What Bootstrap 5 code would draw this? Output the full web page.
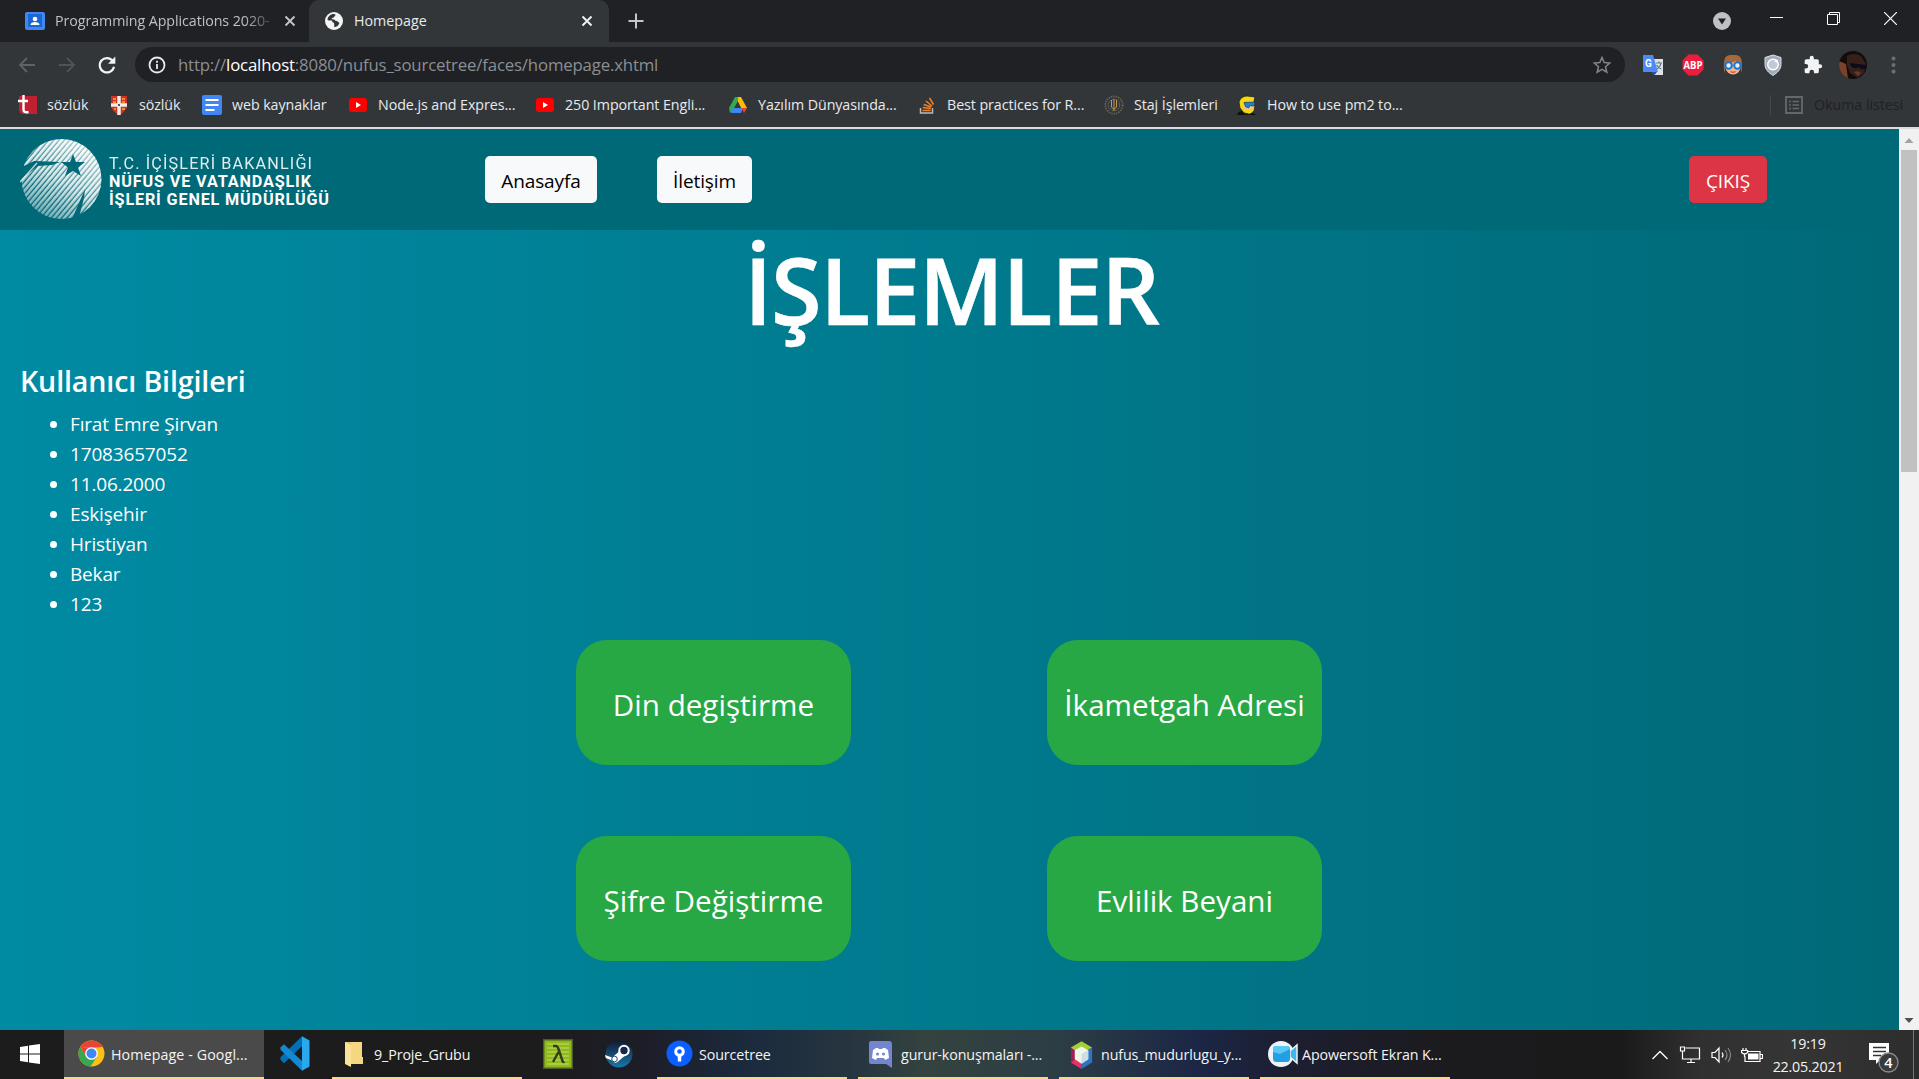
<!DOCTYPE html>
<html lang="tr">
<head>
<meta charset="utf-8">
<title>Homepage</title>
<link href="https://cdn.jsdelivr.net/npm/bootstrap@5.3.0/dist/css/bootstrap.min.css" rel="stylesheet">
<script src="https://cdn.jsdelivr.net/npm/bootstrap@5.3.0/dist/js/bootstrap.bundle.min.js"></script>
<style>
  html, body { height: 1079px; overflow: hidden; }
  body { width: 1919px; font-family: "Open Sans", "Noto Sans", sans-serif; font-size: 14.25px; line-height: 20px; color: #e8eaed; background: #323639; }
  svg { display: block; flex: none; }

  .tabstrip { height: 42px; background: #202124; }
  .tab-idle { width: 309px; padding: 0 0 0 25px; color: #bdc1c6; }
  .tab-idle .tab-name { width: 219px; margin-left: 10px; letter-spacing: -.07px; -webkit-mask-image: linear-gradient(90deg, #000 86%, transparent 102%); mask-image: linear-gradient(90deg, #000 86%, transparent 102%); }
  .tab-idle .tab-x { margin-left: 10px; }
  .tab-open { width: 300px; padding-left: 15px; background: #323639; border-radius: 10px 10px 0 0; }
  .tab-open .tab-name { width: 223px; margin-left: 10px; }
  .tab-plus { margin-left: 19px; }
  .win-cell { width: 57px; padding-top: 12px; }
  .tab-search { margin: 12px 17px 0 auto; }

  .toolbar { height: 44px; padding-left: 17px; padding-top: 1px; }
  .nav-cell { width: 40px; }
  .omnibox { width: 1490px; height: 35px; border-radius: 18px; background: #202124; margin-left: -2px; padding: 0 13px 0 12px; font-size: 16.8px; color: #9aa0a6; }
  .omnibox .url { margin-left: 11px; letter-spacing: -.17px; color: #8b8f94; }
  .omnibox .url b { font-weight: 400; color: #fff; }
  .ext-row { margin-left: 8px; }
  .ext-cell { width: 40px; }

  .bookmarks { height: 41px; padding: 0 16px 4px 17px; }
  .bm-grid { display: grid; grid-template-columns: 92px 93px 146px 187px 193px 189px 187px 133px 190px; }
  .bm-grid > div { gap: 10px; white-space: nowrap; letter-spacing: -.07px; }
  .reading { border-left: 1px solid #45494d; height: 20px; padding-left: 14px; gap: 11px; color: #202124; letter-spacing: -.05px; }

  .viewport { height: 903px; border-top: 2px solid #dcdcde; }
  .page { width: 1899px; background: linear-gradient(90deg, #008ba3, #006978); color: #fff; font-size: 19px; line-height: 30px; }
  .site-head { height: 101px; background: #006978; padding: 0 132px 0 20px; }
  .site-btn { font-size: 19px; line-height: 30px; padding: 8.5px 15px 5px; height: 47px; border-radius: 5px; border: 1px solid transparent; letter-spacing: -.1px; }
  .site-btn.first { width: 112px; margin-left: 153px; }
  .site-btn.second { width: 95px; margin-left: 60px; }
  .site-btn.out { width: 78px; background: #dc3545; }
  .page-title { font-size: 92px; font-weight: 600; line-height: 112px; margin: 4px 0 0 4px; letter-spacing: -1.3px; -webkit-text-stroke: .6px #fff; }
  .user-box { padding: 17px 0 0 20px; }
  .user-box h4 { font-size: 28.6px; font-weight: 600; line-height: 36px; margin: 0 0 10px; letter-spacing: -.13px; }
  .user-box ul { padding-left: 50px; margin: 0; letter-spacing: -.17px; }
  .ops { display: grid; grid-template-columns: 275px 275px; column-gap: 196px; row-gap: 71px; margin: 21px 0 0 576px; }
  .op-card { height: 125px; background: #28a745; border-radius: 31px; font-size: 29.6px; line-height: 45px; padding-top: 4px; white-space: nowrap; }
  .scroll-track { width: 20px; background: #f1f1f1; }
  .scroll-thumb { width: 16px; height: 322px; background: #c1c1c1; }

  .taskbar { height: 49px; background: linear-gradient(90deg, #1c1c1c 0, #1c1c1d 540px, #1d1d27 640px, #1b2a3d 745px, #26353f 850px, #34433f 925px, #2c3d45 1060px, #1b2645 1200px, #1d1e30 1290px, #1b1b1e 1450px, #1a1a1a 1620px, #303030 1700px, #353535 1790px, #2d2d2d 1919px); font-size: 14.25px; color: #f4f4f4; }
  .task { border-bottom: 2px solid transparent; white-space: nowrap; letter-spacing: -.1px; }
  .task.run { border-color: #fcd77f; width: 190px; margin-right: 11px; padding-left: 9px; gap: 6px; }
  .task.current { width: 200px; background: #4a4a4a; margin-right: 0; padding-left: 14px; letter-spacing: .1px; }
  .task.icon-only { width: 68px; }
  .task.start { width: 64px; padding-left: 20px; }
  .task.pinned { width: 124px; padding-left: 10px; gap: 32px; }
  .task > span { padding-top: 3px; }
  .tray { margin-right: 5px; }
  .clock { width: 82px; text-align: center; line-height: 23px; letter-spacing: -.2px; }
  .notif { margin: 4px 0 0 19px; }
  .desk-edge { width: 1px; height: 49px; background: #777; margin-left: 11px; }
</style>
</head>
<body class="d-flex flex-column">

<!-- tab strip -->
<div class="tabstrip d-flex flex-none">
  <div class="tab-idle d-flex align-items-center">
    <svg width="20" height="20" viewBox="0 0 20 20"><rect y="1" width="20" height="18" rx="2" fill="#4285f4"/><rect x="3" y="3" width="14" height="13" fill="#1967d2"/><circle cx="10" cy="8" r="2.300" fill="#fff"/><path d="M5.500 14c0-4 9-4 9 0z" fill="#fff"/></svg>
    <div class="tab-name text-nowrap overflow-hidden">Programming Applications 2020-</div>
    <svg class="tab-x" width="12" height="12" viewBox="0 0 12 12"><path d="M1.500 1.500l9 9m0-9l-9 9" stroke="#c4c7ca" stroke-width="1.800"/></svg>
  </div>
  <div class="tab-open d-flex align-items-center">
    <svg width="20" height="20" viewBox="0 0 20 20"><circle cx="10" cy="10" r="9" fill="#f4f5f5"/><path d="M10 3c-3 0-6 2-6.600 5.500 1.500 1.600 3 1 4.600 1 .2 1 .2 2 2 2.200l.4 4.600c2.500-.300 4-2 5-4-1-1.500-2-2.500-4-2.600-.8-1.500-2.500-1.400-4-1.700.2-1 1.800-.7 2.400-1.700.3-1.300 1.700-1 1.700-2.900z" fill="#323639"/></svg>
    <div class="tab-name">Homepage</div>
    <svg class="ms-1" width="12" height="12" viewBox="0 0 12 12"><path d="M1.500 1.500l9 9m0-9l-9 9" stroke="#f1f3f4" stroke-width="1.900"/></svg>
  </div>
  <svg class="tab-plus align-self-center" width="16" height="16" viewBox="0 0 16 16"><path d="M8 .5v15M.5 8h15" stroke="#c4c7ca" stroke-width="2"/></svg>
  <svg class="tab-search" width="18" height="18" viewBox="0 0 18 18"><circle cx="9" cy="9" r="9" fill="#bdc1c6"/><path d="M5 6.500h8L9 12.500z" fill="#202124"/></svg>
  <div class="win-cell d-flex justify-content-center"><svg width="13" height="13"><path d="M0 5.500h13" stroke="#fff"/></svg></div>
  <div class="win-cell d-flex justify-content-center"><svg width="13" height="13"><path d="M.5 2.500h10v10H.5zM2.500 2.500v-2h10v10h-2" fill="none" stroke="#fff"/></svg></div>
  <div class="win-cell d-flex justify-content-center"><svg width="13" height="13"><path d="M0 0l13 13M13 0L0 13" stroke="#fff" stroke-width="1.200"/></svg></div>
</div>

<!-- address row -->
<div class="toolbar d-flex align-items-center">
  <div class="nav-cell"><svg width="20" height="20" viewBox="0 0 20 20"><path d="M18 10H3M10 3l-7 7 7 7" fill="none" stroke="#5f6368" stroke-width="1.800"/></svg></div>
  <div class="nav-cell"><svg width="20" height="20" viewBox="0 0 20 20"><path d="M2 10h15M10 3l7 7-7 7" fill="none" stroke="#505458" stroke-width="1.800"/></svg></div>
  <div class="nav-cell"><svg width="20" height="20" viewBox="0 0 20 20"><path d="M15.800 6A7.200 7.200 0 1 0 17 11.800" fill="none" stroke="#f1f3f4" stroke-width="2.200"/><path d="M18.300 1.500v7.300H11z" fill="#f1f3f4"/></svg></div>
  <div class="omnibox d-flex align-items-center">
    <svg class="ms-0" width="20" height="20" viewBox="0 0 20 20"><circle cx="10" cy="10" r="7.500" fill="none" stroke="#e8eaed" stroke-width="1.800"/><path d="M10 9v5M10 5.800v1.900" stroke="#e8eaed" stroke-width="1.800"/></svg>
    <span class="url text-nowrap">http://<b>localhost</b>:8080/nufus_sourcetree/faces/homepage.xhtml</span>
    <svg class="ms-auto" width="20" height="20" viewBox="0 0 20 20"><path d="M10 2.500l2.200 5.100 5.500.5-4.200 3.700 1.300 5.400-4.800-2.900-4.800 2.900 1.300-5.400L2.300 8.100l5.500-.5z" fill="none" stroke="#80858a" stroke-width="1.500"/></svg>
  </div>
  <div class="ext-row d-flex align-items-center">
    <div class="ext-cell d-flex justify-content-center"><svg width="22" height="22" viewBox="0 0 22 22"><path d="M8 5h13v16H12z" fill="#dfe1e3"/><path d="M1 1h10l5 17H1z" fill="#4c8bf5"/><path d="M9 18h6l-3 3.500z" fill="#3347a8"/><path d="M14 9h6m-3-1.500V9m2 0c-.5 3-2 5-4 6m-.5-4c1 2 3 3.500 5 4" stroke="#607d8b" fill="none" stroke-width="1.200"/><text x="3" y="12.500" font-size="10" font-weight="700" font-family="Roboto" fill="#fff">G</text></svg></div>
    <div class="ext-cell d-flex justify-content-center"><svg width="22" height="22" viewBox="0 0 22 22"><path d="M6.500.5h9l6 6v9l-6 6h-9l-6-6v-9z" fill="#ee1d3e"/><text x="11" y="14.500" text-anchor="middle" textLength="19" lengthAdjust="spacingAndGlyphs" font-size="10.500" font-weight="700" font-family="Open Sans" fill="#fff">ABP</text></svg></div>
    <div class="ext-cell d-flex justify-content-center"><svg width="22" height="22" viewBox="0 0 22 22"><ellipse cx="11" cy="13" rx="7.500" ry="7.500" fill="#f3b48b"/><path d="M2.500 19C0 0 6 1 11 1s11-1 8.500 18L18 12c-2-1-4-3-4.500-5C11 9 7 10 4 11z" fill="#a9683a"/><circle cx="6.600" cy="11.500" r="3.200" fill="#e3f2ff" stroke="#1976d2" stroke-width="2"/><circle cx="15.400" cy="11.500" r="3.200" fill="#e3f2ff" stroke="#1976d2" stroke-width="2"/><path d="M8.500 17.500q2.500 1.500 5 0" stroke="#c43" stroke-width="1.200" fill="none"/></svg></div>
    <div class="ext-cell d-flex justify-content-center"><svg width="22" height="22" viewBox="0 0 22 22"><path d="M11 1l8 2.500v7c0 5-4 8.500-8 11-4-2.500-8-6-8-11v-7z" fill="#a3acbc" stroke="#dce0e6"/><circle cx="11" cy="10.500" r="5.300" fill="#c4cad5" stroke="#fff" stroke-width="1.400"/><circle cx="14.500" cy="7" r="1.500" fill="#fff"/></svg></div>
    <div class="ext-cell d-flex justify-content-center"><svg width="20" height="20" viewBox="0 0 24 24"><path d="M20.500 11H19V7a2 2 0 0 0-2-2h-4V3.500a2.500 2.500 0 0 0-5 0V5H4a2 2 0 0 0-2 2v3.800h1.500a2.700 2.700 0 0 1 0 5.400H2V20a2 2 0 0 0 2 2h3.800v-1.500a2.700 2.700 0 0 1 5.400 0V22H17a2 2 0 0 0 2-2v-4h1.500a2.500 2.500 0 0 0 0-5z" fill="#f1f3f4"/></svg></div>
    <div class="ext-cell d-flex justify-content-center"><svg width="28" height="28" viewBox="0 0 28 28"><defs><clipPath id="av"><circle cx="14" cy="14" r="14"/></clipPath></defs><g clip-path="url(#av)"><path d="M0 0h28v28H0z" fill="#120c0b"/><path d="M0 10l7 3 2 15H0z" fill="#7c4229"/><path d="M8 5q7-4 14 0l5 8-2 9-6 5-8-5-3-8z" fill="#37201a"/><path d="M11 12l8 1 8 1-1 4q-5 1-6-2-2 2-5 1-4-1-4-5z" fill="#0b0b1b"/><path d="M15 21q4-2 7 1l-3 3z" fill="#6b3a26"/><path d="M21 28l7-8v8z" fill="#9b5d31"/></g></svg></div>
    <div class="ext-cell d-flex justify-content-center"><svg width="5" height="18"><g fill="#6b6f73"><circle cx="2.500" cy="2.500" r="2"/><circle cx="2.500" cy="9" r="2"/><circle cx="2.500" cy="15.500" r="2"/></g></svg></div>
  </div>
</div>

<!-- bookmarks -->
<div class="bookmarks d-flex align-items-center justify-content-between">
  <div class="bm-grid">
    <div class="d-flex align-items-center"><svg width="20" height="20" viewBox="0 0 20 20"><path d="M2 1h18v18H5q-3-1-3-5z" fill="#c0202f"/><path d="M6.500 0v14.500q0 3.500 5 2.500M1 6h10" stroke="#fff" stroke-width="2.400" fill="none"/></svg>sözlük</div>
    <div class="d-flex align-items-center"><svg width="20" height="20" viewBox="0 0 20 20"><path d="M2 1h16v11q-2 5-8 8-6-3-8-8z" fill="#cf3327"/><path d="M10 1v19M2 10h16" stroke="#f3ece4" stroke-width="3.500"/><path d="M4 4h3m6 0h3M4 7h3m6 0h3M5 14h2m6 0h3" stroke="#f0b03c" stroke-width="1.500"/><path d="M9 10h2" stroke="#555" stroke-width="2"/></svg>sözlük</div>
    <div class="d-flex align-items-center"><svg width="20" height="20" viewBox="0 0 20 20"><rect width="20" height="20" rx="2" fill="#4285f4"/><path d="M3.500 5h13M3.500 10h13M3.500 15h9" stroke="#fff" stroke-width="2"/></svg>web kaynaklar</div>
    <div class="d-flex align-items-center"><svg width="20" height="20" viewBox="0 0 20 20"><rect x="1" y="3" width="18" height="14" rx="3" fill="#f00"/><path d="M8 7l5 3-5 3z" fill="#fff"/></svg>Node.js and Expres...</div>
    <div class="d-flex align-items-center"><svg width="20" height="20" viewBox="0 0 20 20"><rect x="1" y="3" width="18" height="14" rx="3" fill="#f00"/><path d="M8 7l5 3-5 3z" fill="#fff"/></svg>250 Important Engli...</div>
    <div class="d-flex align-items-center"><svg width="20" height="20" viewBox="0 0 20 20"><path d="M7 2h3v4l-5 9-3 3-1-5z" fill="#34a853"/><path d="M10 2h3l6 11h-6l-3-6z" fill="#fbbc04"/><path d="M5 13h10l-2 5H4l-2-1z" fill="#4285f4"/><path d="M13.500 13H19l-3 5z" fill="#ea4335"/><path d="M10 7l3 6H7z" fill="#323639"/></svg>Yazılım Dünyasında...</div>
    <div class="d-flex align-items-center"><svg width="20" height="20" viewBox="0 0 20 20"><path d="M3.500 13v5h12v-5" stroke="#bcbbbb" stroke-width="1.500" fill="none"/><path d="M5.500 15.500h8M5.700 12.500l8 1M6.700 9.500l7.500 2.500M9 6l6 5M12.500 3l4 6.500" stroke="#f48024" stroke-width="1.500"/></svg>Best practices for R...</div>
    <div class="d-flex align-items-center"><svg width="20" height="20" viewBox="0 0 20 20"><circle cx="10" cy="10" r="8.700" fill="#303943" stroke="#6f6347" stroke-width="1.600" stroke-dasharray="1.500 1"/><circle cx="10" cy="10" r="5.700" fill="none" stroke="#756744" stroke-dasharray="2 1"/><path d="M10 4v12M7.500 5v7q2.500 4 5 0V5" stroke="#c29a4b" fill="none"/></svg>Staj İşlemleri</div>
    <div class="d-flex align-items-center"><svg width="20" height="20" viewBox="0 0 20 20"><path d="M0 20q1-4 5-4l10 1 4 3z" fill="#111"/><path d="M2 7q2-6 8-6l8 1-1 4 1 5-1 5-4 3-6-1-4-5z" fill="#f5d90f" stroke="#222" stroke-width=".8"/><path d="M6 7l9-2 2 5-1 5-4 2-5-3z" fill="#f0bd93"/><path d="M7 7.500l11-.5-.5 4h-3l-1-1-2 3-3-1.500z" fill="#1787d4" stroke="#123" stroke-width=".6"/><path d="M8 14l6 .5 2-1-1 4-4 1z" fill="#f5d90f"/></svg>How to use pm2 to...</div>
  </div>
  <div class="reading d-flex align-items-center">
    <svg width="18" height="18" viewBox="0 0 18 18"><path d="M1 1h16v16H1z" fill="none" stroke="#64686c" stroke-width="1.800"/><path d="M4 5.500h2m1.500 0H14M4 9h2m1.500 0H14M4 12.500h2m1.500 0H14" stroke="#64686c" stroke-width="1.500"/></svg>
    <span>Okuma listesi</span>
  </div>
</div>

<!-- web page -->
<div class="viewport d-flex">
  <main class="page">
    <header class="site-head d-flex align-items-center">
      <svg width="312" height="84" viewBox="0 0 312 84" font-family="Roboto, sans-serif" font-size="16.200" fill="#fff">
        <defs>
          <pattern id="hatch" width="4" height="4" patternUnits="userSpaceOnUse" patternTransform="rotate(40)"><path d="M0 0h2.700v4H0z" fill="#fff"/></pattern>
          <linearGradient id="fadeGlobe" x1=".75" y1=".1" x2=".25" y2=".95"><stop offset="0" stop-color="#fff"/><stop offset=".5" stop-color="#ddd"/><stop offset="1" stop-color="#777"/></linearGradient>
          <mask id="globe"><circle cx="41.500" cy="41" r="40" fill="url(#fadeGlobe)"/><path d="M53 16l3 8 9 0-7 5.500 3 8.500-8-5-8 5 3-8.500-7-5.500h9zM0 30l14-7 26 1-8 3-14 1L0 42zM51 83l8-18 6-14-1 9-6 23z" fill="#000"/></mask>
          <linearGradient id="glow" x1=".9" y1="0" x2=".3" y2=".7"><stop offset="0" stop-color="#fff" stop-opacity=".75"/><stop offset="1" stop-color="#fff" stop-opacity="0"/></linearGradient>
        </defs>
        <g mask="url(#globe)"><path d="M0 0h84v84H0z" fill="url(#hatch)"/><path d="M0 0h84v84H0z" fill="url(#glow)"/></g>
        <path d="M0 44l17-19" stroke="#fff" stroke-width="1.500" opacity=".7"/>
        <text x="89" y="31" textLength="203" opacity=".88">T.C. İÇİŞLERİ BAKANLIĞI</text>
        <text x="89" y="48.500" textLength="202" font-weight="700">NÜFUS VE VATANDAŞLIK</text>
        <text x="89" y="67" textLength="220" font-weight="700">İŞLERİ GENEL MÜDÜRLÜĞÜ</text>
      </svg>
      <a class="btn btn-light site-btn first text-nowrap">Anasayfa</a>
      <a class="btn btn-light site-btn second text-nowrap">İletişim</a>
      <a class="btn btn-danger site-btn out ms-auto text-nowrap">ÇIKIŞ</a>
    </header>
    <h1 class="page-title text-center">İŞLEMLER</h1>
    <section class="user-box">
      <h4>Kullanıcı Bilgileri</h4>
      <ul>
        <li>Fırat Emre Şirvan</li>
        <li>17083657052</li>
        <li>11.06.2000</li>
        <li>Eskişehir</li>
        <li>Hristiyan</li>
        <li>Bekar</li>
        <li>123</li>
      </ul>
    </section>
    <section class="ops">
      <div class="op-card d-flex align-items-center justify-content-center">Din degiştirme</div>
      <div class="op-card d-flex align-items-center justify-content-center">İkametgah Adresi</div>
      <div class="op-card d-flex align-items-center justify-content-center">Şifre Değiştirme</div>
      <div class="op-card d-flex align-items-center justify-content-center">Evlilik Beyani</div>
    </section>
  </main>
  <div class="scroll-track d-flex flex-column align-items-center justify-content-between">
    <div><svg width="16" height="21"><path d="M3.500 14l4.500-5 4.500 5z" fill="#a3a3a3"/></svg><div class="scroll-thumb"></div></div>
    <svg width="16" height="21"><path d="M3.500 9l4.500 5 4.500-5z" fill="#505050"/></svg>
  </div>
</div>

<!-- taskbar -->
<div class="taskbar d-flex">
  <div class="task start d-flex align-items-center"><svg width="20" height="20" viewBox="0 0 20 20"><path d="M0 3l8-1.200v7.700H0zM9 1.600L20 0v9.500H9zM0 10.500h8v7.700L0 17zM9 10.500h11V20L9 18.400z" fill="#fff"/></svg></div>
  <div class="task run current d-flex align-items-center"><svg width="27" height="27" viewBox="0 0 28 28"><circle cx="14" cy="14" r="13.500" fill="#fbc116"/><path d="M2.300 7.200A13.500 13.500 0 0 1 25.700 7.200L14 8z" fill="#ea4335"/><path d="M2.300 7.200A13.500 13.500 0 0 0 13 27.500l6.500-10L8.500 17z" fill="#34a853"/><path d="M2.300 7.200L8.500 17 14 8z" fill="#ea4335"/><circle cx="14" cy="14" r="6.600" fill="#fff"/><circle cx="14" cy="14" r="5.200" fill="#4285f4"/></svg><span>Homepage - Googl...</span></div>
  <div class="task icon-only d-flex align-items-center ps-3"><svg width="30" height="37" viewBox="0 0 30 30" preserveAspectRatio="none"><path d="M22 1l7.500 3.500v21L22 29z" fill="#29a8ee"/><path d="M22 1v8L4 23l-3.500-3v-2z" fill="#0070b8"/><path d="M22 29v-8L4 7.500.5 10v2z" fill="#1389d2"/></svg></div>
  <div class="task run d-flex align-items-center"><svg width="23" height="28" viewBox="0 0 23 28"><path d="M4 2h14v20H4z" fill="#e9c46c"/><path d="M10 2h11v15h1v7H10z" fill="#f6d781"/><path d="M4 2l6 3v22l-6-3z" fill="#fbe29a"/></svg><span class="ms-1">9_Proje_Grubu</span></div>
  <div class="task pinned d-flex align-items-center">
    <svg width="30" height="30" viewBox="0 0 30 30"><path d="M.7.700h28.600v28.600H.7z" fill="#8fbb16" stroke="#4d5a35" stroke-width="1.400"/><path d="M4 5h22M4 9h22M4 13h22M4 17h22M4 21h22M4 25h22" stroke="#c5dc7c" stroke-width="1.200"/><path d="M10 7h3q1.500 0 2.500 3l4 12q.5 1.500 2 1M15.500 13L10 23" stroke="#333d1c" stroke-width="2.400" fill="none"/></svg>
    <svg width="28" height="28" viewBox="0 0 28 28"><defs><linearGradient id="stm" x2="0" y2="1"><stop stop-color="#111a33"/><stop offset="1" stop-color="#1878a8"/></linearGradient></defs><circle cx="14" cy="14" r="13.500" fill="url(#stm)"/><path d="M0 15l7 2.500 6-5 3-4 8 5-5 3-6 5q-3 3-6-1L.8 18z" fill="#fff"/><circle cx="19" cy="10.500" r="4.700" fill="#17294a" stroke="#fff" stroke-width="2"/><circle cx="9.500" cy="19" r="2.800" fill="none" stroke="#294b74"/></svg>
  </div>
  <div class="task run d-flex align-items-center"><svg width="27" height="27" viewBox="0 0 27 27"><circle cx="13.500" cy="13.500" r="13" fill="#0b5fff"/><circle cx="13.500" cy="11.500" r="3.800" fill="none" stroke="#fff" stroke-width="3"/><path d="M13.500 15v6.500" stroke="#fff" stroke-width="3.500"/></svg><span>Sourcetree</span></div>
  <div class="task run d-flex align-items-center"><svg width="28" height="28" viewBox="0 0 28 28"><path d="M4 1h18q3 0 3 3v24l-6-4H4q-2 0-2-2V3q0-2 2-2z" fill="#7485cf"/><path d="M5 18l1-8 3-2h2l1 1h3l1-1h2l3 2 1 8-4 2-1-2H10l-1 2z" fill="#fff"/><circle cx="10.500" cy="14" r="1.500" fill="#7485cf"/><circle cx="16.500" cy="14" r="1.500" fill="#7485cf"/></svg><span>gurur-konuşmaları -...</span></div>
  <div class="task run d-flex align-items-center"><svg width="27" height="30" viewBox="0 0 28 28" preserveAspectRatio="none"><path d="M14 2l11 6-4 4-7-4-8 4-3-4z" fill="#a6ce39"/><path d="M3 8l5 3v9l-5 2z" fill="#a51c54"/><path d="M3 22l5-3 6 4v5z" fill="#e7306a"/><path d="M25 8v14l-11 6v-5l6-4v-9z" fill="#2b73c4"/><path d="M14 7l7 3.500v8.500l-7 4-7-4v-8.500z" fill="#eef6e8"/><path d="M14 14l7-3.500v8.500l-7 4z" fill="#cddde4"/></svg><span>nufus_mudurlugu_y...</span></div>
  <div class="task run d-flex align-items-center me-0 ps-2 gap-1"><svg width="30" height="28" viewBox="0 0 30 28"><circle cx="13" cy="14" r="13" fill="#edf3f8"/><path d="M22 11l7-6v18l-7-6z" fill="#42b5ed" stroke="#edf3f8" stroke-width="1.500"/><rect x="5" y="6" width="17" height="16" rx="3.500" fill="#249fe4"/><path d="M5 12V9q0-3 3-3h11q3 0 3 3l-10 5z" fill="#5ac7f5"/></svg><span>Apowersoft Ekran K...</span></div>

  <div class="tray d-flex align-items-center ms-auto">
    <svg width="18" height="12"><path d="M1.500 10L9 2.500l7.500 7.500" fill="none" stroke="#fff" stroke-width="1.300"/></svg>
    <svg class="ms-2" width="26" height="20" viewBox="0 0 26 20"><path d="M8.500 3h14v11H5.500V9M14 14v3.500M10 17.500h8" fill="none" stroke="#fff" stroke-width="1.200"/><path d="M3.500 2h4v4h-4zM5.500 6v3" fill="none" stroke="#fff" stroke-width="1.200"/></svg>
    <svg class="ms-2" width="22" height="20" viewBox="0 0 22 20"><path d="M1 7.500h3l4-4.500v14l-4-4.500H1z" fill="none" stroke="#fff" stroke-width="1.200"/><path d="M11 7.500q2 2.500 0 5" fill="none" stroke="#fff" stroke-width="1.200"/><path d="M14 5q4 5 0 10M17 3q5 7 0 14" fill="none" stroke="#888" stroke-width="1.200"/></svg>
    <svg class="ms-2" width="22" height="20" viewBox="0 0 22 20"><path d="M5 6.500h14v10H4v-5M19.500 9.500h2v4h-2" fill="none" stroke="#fff" stroke-width="1.200"/><path d="M7 8.500h10.500v6H7z" fill="#fff"/><path d="M.6 5.500h6v2q-3 3-6 0zM2 3v2.500M5 3v2.500M3.500 9v3" fill="#303030" stroke="#fff" stroke-width="1.200"/></svg>
    <div class="clock ms-1"><div>19:19</div><div>22.05.2021</div></div>
    <svg class="notif" width="34" height="34" viewBox="0 0 34 34"><path d="M1 3h20v17h-9l-4 4v-4H1z" fill="#fff"/><path d="M5 7.500h13M5 11.500h13M5 15.500h8" stroke="#333" stroke-width="1.400"/><circle cx="20.500" cy="22.500" r="9.500" fill="#3a3a3a" stroke="#8a8a8a" stroke-width="1.300"/><text x="20.500" y="28" text-anchor="middle" font-size="14.500" font-weight="600" fill="#fff">4</text></svg>
    <div class="desk-edge"></div>
  </div>
</div>
</body>
</html>
